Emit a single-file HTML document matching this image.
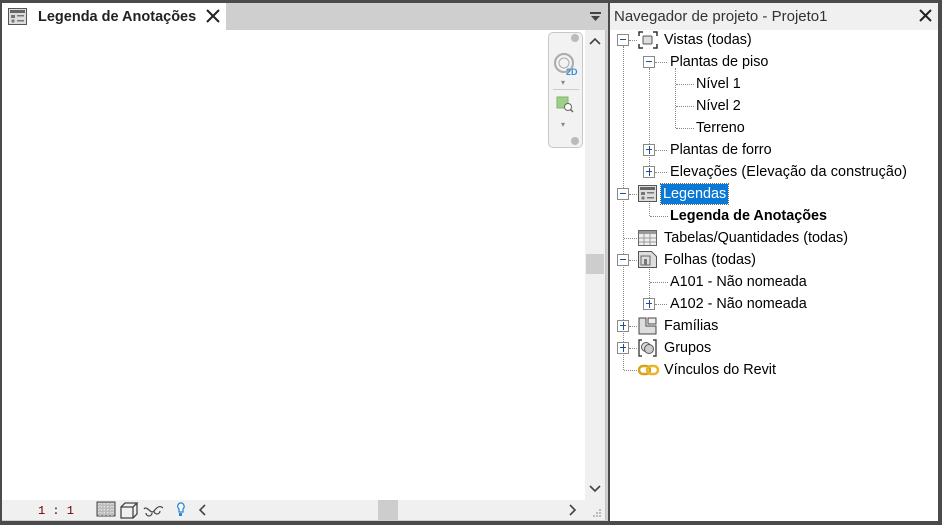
<!DOCTYPE html><html><head><meta charset="utf-8"><style>
*{box-sizing:border-box;margin:0;padding:0}
body{width:942px;height:525px;background:#4b4b4b;position:relative;overflow:hidden;font-family:"Liberation Sans",sans-serif;font-size:14.4px;color:#000}
.a{position:absolute}
.t{position:absolute;white-space:nowrap;line-height:18px}
.h{position:absolute;border-top:1px dotted #888;height:0}
.v{position:absolute;border-left:1px dotted #888;width:0}
.bx{position:absolute;width:12px;height:12px;border:1px solid #8a8a8a;background:#fff}
.bx:before{content:"";position:absolute;left:2px;top:4px;width:6px;height:1px;background:#1f4e9e}
.bx.p:after{content:"";position:absolute;left:5px;top:1px;width:1px;height:8px;background:#1f4e9e}
</style></head><body>
<div class="a" style="left:2px;top:3px;width:606px;height:518px;background:#cfcfcf"></div>
<div class="a" style="left:2px;top:3px;width:224px;height:27px;background:#fff"></div>
<svg class="a" style="left:8px;top:8px" width="20" height="18"><rect x="0.5" y="0.5" width="18" height="16" fill="#ddd" stroke="#555"/><rect x="2" y="2" width="15" height="3" fill="#666"/><rect x="3" y="7" width="4" height="3" fill="#777"/><rect x="9" y="7" width="7" height="1.5" fill="#777"/><circle cx="5" cy="13" r="1.6" fill="#777"/><rect x="9" y="12" width="7" height="1.5" fill="#777"/></svg>
<div class="t" style="left:38px;top:8px;font-weight:bold;font-size:14.5px;color:#222">Legenda de Anotações</div>
<svg class="a" style="left:206px;top:9px" width="14" height="14"><path d="M1 1L13 13M13 1L1 13" stroke="#222" stroke-width="2"/></svg>
<svg class="a" style="left:590px;top:12px" width="12" height="10"><rect x="0" y="0" width="11" height="2" fill="#444"/><path d="M1 4H10L5.5 9Z" fill="#444"/></svg>
<div class="a" style="left:2px;top:30px;width:583px;height:470px;background:#fff"></div>
<div class="a" style="left:548px;top:32px;width:35px;height:116px;border:1px solid #c8c8c8;border-radius:5px;background:#f2f2f2"></div>
<div class="a" style="left:571px;top:34px;width:8px;height:8px;border-radius:50%;background:#bbb"></div>
<svg class="a" style="left:553px;top:52px" width="26" height="26"><circle cx="11" cy="11" r="9" fill="none" stroke="#aaa" stroke-width="2"/><circle cx="11" cy="11" r="5" fill="none" stroke="#aaa"/><text x="13" y="23" font-size="9" font-weight="bold" fill="#3a8fd0" font-family="Liberation Sans">2D</text></svg>
<div class="t" style="left:561px;top:74px;font-size:8px;color:#888">▾</div>
<div class="a" style="left:553px;top:89px;width:26px;height:1px;background:#ccc"></div>
<svg class="a" style="left:556px;top:96px" width="20" height="18"><rect x="1" y="1" width="11" height="11" fill="#9fd08a" stroke="#7ab866"/><circle cx="12" cy="11" r="3.5" fill="#fff" stroke="#666"/><path d="M14.5 13.5L17 16" stroke="#666" stroke-width="1.5"/></svg>
<div class="t" style="left:561px;top:116px;font-size:8px;color:#888">▾</div>
<div class="a" style="left:571px;top:137px;width:8px;height:8px;border-radius:50%;background:#bbb"></div>
<div class="a" style="left:585px;top:30px;width:20px;height:470px;background:#f0f0f0"></div>
<div class="a" style="left:586px;top:254px;width:18px;height:20px;background:#cdcdcd"></div>
<svg class="a" style="left:589px;top:37px" width="12" height="8"><path d="M1 7L6 2L11 7" fill="none" stroke="#444" stroke-width="1.6"/></svg>
<svg class="a" style="left:589px;top:485px" width="12" height="8"><path d="M1 1L6 6L11 1" fill="none" stroke="#444" stroke-width="1.6"/></svg>
<div class="a" style="left:605px;top:30px;width:1px;height:490px;background:#c2c2c2"></div>
<div class="a" style="left:2px;top:500px;width:603px;height:20px;background:#f0f0f0"></div>
<div class="t" style="left:38px;top:502px;font-size:12px;font-family:'Liberation Mono',monospace;color:#600">1 : 1</div>
<svg class="a" style="left:96px;top:501px" width="95" height="18"><rect x="1" y="1" width="18" height="14" fill="#bbb" stroke="#444"/><path d="M2 3h16M2 6h16M2 9h16M2 12h16M4 2v13M8 2v13M12 2v13M16 2v13" stroke="#eee" stroke-width="1" stroke-dasharray="1 2"/><path d="M25 6h12v11H25zM25 6l4-4h12l-4 4M37 17l4-4V2" fill="none" stroke="#444" stroke-width="1.3"/><path d="M48 8c3-4 7 6 10 2s6-6 9-3M50 12a3 3 0 1 0 6 0M58 10a3 3 0 1 0 6 0" fill="none" stroke="#444" stroke-width="1.2"/><path d="M84 2a3.5 3.5 0 0 1 3 6v3h-4V8a3.5 3.5 0 0 1 1-6z" fill="#fff" stroke="#2a8ad8" stroke-width="1.3"/><rect x="83" y="12" width="3" height="3" fill="#2a8ad8"/></svg>
<svg class="a" style="left:199px;top:504px" width="8" height="12"><path d="M6 1L1 6L6 11" fill="none" stroke="#444" stroke-width="1.6"/></svg>
<div class="a" style="left:378px;top:500px;width:20px;height:20px;background:#cdcdcd"></div>
<svg class="a" style="left:569px;top:504px" width="8" height="12"><path d="M1 1L6 6L1 11" fill="none" stroke="#444" stroke-width="1.6"/></svg>
<svg class="a" style="left:592px;top:508px" width="10" height="10" fill="#bbb"><rect x="7" y="1" width="2" height="2"/><rect x="4" y="4" width="2" height="2"/><rect x="7" y="4" width="2" height="2"/><rect x="1" y="7" width="2" height="2"/><rect x="4" y="7" width="2" height="2"/><rect x="7" y="7" width="2" height="2"/></svg>
<div class="a" style="left:610px;top:3px;width:328px;height:518px;background:#fff"></div>
<div class="a" style="left:610px;top:3px;width:328px;height:27px;background:#f0f0f0"></div>
<div class="t" style="left:614px;top:8px;color:#333;font-size:15px">Navegador de projeto - Projeto1</div>
<svg class="a" style="left:919px;top:9px" width="13" height="13"><path d="M1 1L12 12M12 1L1 12" stroke="#222" stroke-width="2"/></svg>
<div class="v" style="left:623px;top:46px;height:324px"></div>
<div class="v" style="left:649px;top:68px;height:104px"></div>
<div class="v" style="left:675px;top:68px;height:60px"></div>
<div class="v" style="left:649px;top:200px;height:16px"></div>
<div class="v" style="left:649px;top:266px;height:38px"></div>
<div class="h" style="left:629px;top:40px;width:8px"></div>
<div class="h" style="left:655px;top:62px;width:12px"></div>
<div class="h" style="left:676px;top:84px;width:18px"></div>
<div class="h" style="left:676px;top:106px;width:18px"></div>
<div class="h" style="left:676px;top:128px;width:18px"></div>
<div class="h" style="left:655px;top:150px;width:12px"></div>
<div class="h" style="left:655px;top:172px;width:12px"></div>
<div class="h" style="left:629px;top:194px;width:8px"></div>
<div class="h" style="left:650px;top:216px;width:18px"></div>
<div class="h" style="left:624px;top:238px;width:13px"></div>
<div class="h" style="left:629px;top:260px;width:8px"></div>
<div class="h" style="left:650px;top:282px;width:18px"></div>
<div class="h" style="left:655px;top:304px;width:12px"></div>
<div class="h" style="left:629px;top:326px;width:8px"></div>
<div class="h" style="left:629px;top:348px;width:8px"></div>
<div class="h" style="left:624px;top:370px;width:13px"></div>
<div class="bx" style="left:617px;top:34px"></div>
<div class="bx" style="left:643px;top:56px"></div>
<div class="bx p" style="left:643px;top:144px"></div>
<div class="bx p" style="left:643px;top:166px"></div>
<div class="bx" style="left:617px;top:188px"></div>
<div class="bx" style="left:617px;top:254px"></div>
<div class="bx p" style="left:643px;top:298px"></div>
<div class="bx p" style="left:617px;top:320px"></div>
<div class="bx p" style="left:617px;top:342px"></div>
<svg class="a" style="left:638px;top:31px" width="20" height="18"><path d="M1 5V1h4M15 1h4v4M19 13v4h-4M5 17H1v-4" fill="none" stroke="#333" stroke-width="1.5"/><rect x="5" y="5" width="9" height="8" rx="1" fill="#ddd" stroke="#555"/></svg>
<svg class="a" style="left:638px;top:185px" width="20" height="18"><rect x="0.5" y="0.5" width="18" height="16" fill="#ddd" stroke="#555"/><rect x="2" y="2" width="15" height="3" fill="#666"/><rect x="3" y="7" width="4" height="3" fill="#777"/><rect x="9" y="7" width="7" height="1.5" fill="#777"/><circle cx="5" cy="13" r="1.6" fill="#777"/><rect x="9" y="12" width="7" height="1.5" fill="#777"/></svg>
<svg class="a" style="left:638px;top:229px" width="20" height="18"><rect x="0.5" y="1.5" width="18" height="15" fill="#eee" stroke="#666"/><rect x="1" y="2" width="17" height="3" fill="#999"/><path d="M1 9h17M1 13h17M6 5v11M12 5v11" stroke="#999"/></svg>
<svg class="a" style="left:638px;top:251px" width="20" height="18"><path d="M0.5 0.5h13l5 5v11H0.5z" fill="#ddd" stroke="#555"/><rect x="3" y="5" width="9" height="9" fill="none" stroke="#666"/><rect x="6" y="8" width="3" height="6" fill="#777"/></svg>
<svg class="a" style="left:638px;top:317px" width="20" height="18"><path d="M1 1h7v8h10v8H1z" fill="#ddd" stroke="#444"/><path d="M10 1h8v6h-8z" fill="#eee" stroke="#444"/></svg>
<svg class="a" style="left:638px;top:339px" width="20" height="18"><path d="M4 1H1v16h3M15 1h3v16h-3" fill="none" stroke="#444" stroke-width="1.4"/><circle cx="8" cy="8" r="4.5" fill="#ddd" stroke="#555"/><circle cx="11" cy="10" r="4.5" fill="#ccc" stroke="#555"/></svg>
<svg class="a" style="left:638px;top:364px" width="22" height="12"><rect x="1" y="2" width="11" height="8" rx="4" fill="none" stroke="#d9a21c" stroke-width="2.5"/><rect x="9" y="2" width="11" height="8" rx="4" fill="none" stroke="#e8b52a" stroke-width="2.5"/></svg>
<div class="t" style="left:664px;top:31px">Vistas (todas)</div>
<div class="t" style="left:670px;top:53px">Plantas de piso</div>
<div class="t" style="left:696px;top:75px">Nível 1</div>
<div class="t" style="left:696px;top:97px">Nível 2</div>
<div class="t" style="left:696px;top:119px">Terreno</div>
<div class="t" style="left:670px;top:141px">Plantas de forro</div>
<div class="t" style="left:670px;top:163px;letter-spacing:0.1px">Elevações (Elevação da construção)</div>
<div class="t" style="left:661px;top:184px;background:#0a78d7;color:#fff;padding:0 2px;outline:1px dotted #666;line-height:20px">Legendas</div>
<div class="t" style="left:670px;top:207px;font-weight:bold">Legenda de Anotações</div>
<div class="t" style="left:664px;top:229px">Tabelas/Quantidades (todas)</div>
<div class="t" style="left:664px;top:251px">Folhas (todas)</div>
<div class="t" style="left:670px;top:273px">A101 - Não nomeada</div>
<div class="t" style="left:670px;top:295px">A102 - Não nomeada</div>
<div class="t" style="left:664px;top:317px">Famílias</div>
<div class="t" style="left:664px;top:339px">Grupos</div>
<div class="t" style="left:664px;top:361px">Vínculos do Revit</div>
</body></html>
